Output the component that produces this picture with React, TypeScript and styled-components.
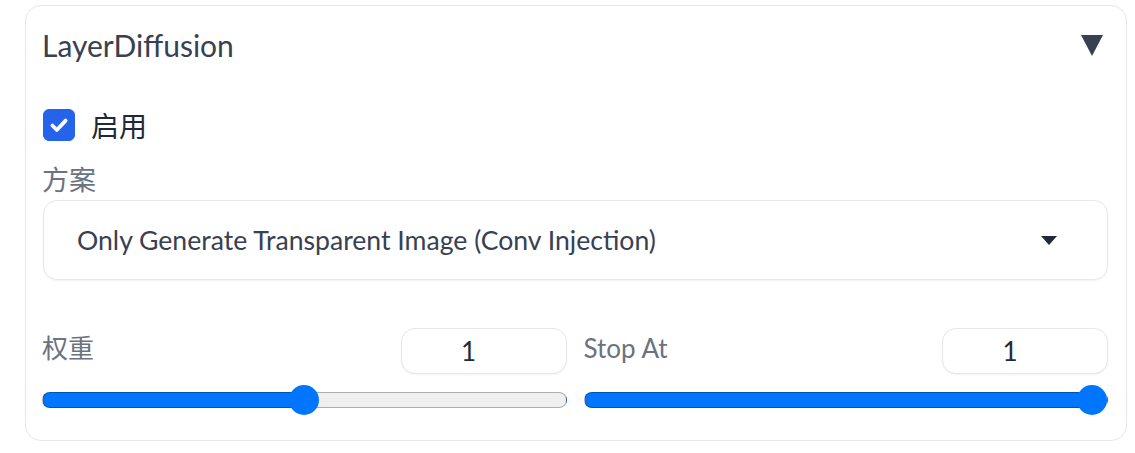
import { useState } from "react";
import styled, { createGlobalStyle } from "styled-components";

const GlobalStyle = createGlobalStyle`
  html, body {
    margin: 0;
    padding: 0;
    background: #ffffff;
  }
  body {
    font-family: Lato, "Noto Sans CJK SC", sans-serif;
  }
  * {
    box-sizing: border-box;
  }
`;

const Page = styled.div`
  padding: 5px 8px 0 25px;
`;

const Panel = styled.div`
  width: 1102px;
  border: 1px solid #e5e7eb;
  border-radius: 16px;
  padding: 19px 18px 25px 16px;
  display: flex;
  flex-direction: column;
  background: #fff;
`;

const Header = styled.div`
  display: flex;
  align-items: center;
  justify-content: space-between;
  height: 40px;
`;

const Title = styled.span`
  font-size: 30px;
  color: #374151;
`;

const Caret = styled.span`
  width: 22px;
  height: 22px;
  display: flex;
  margin-right: 5px;
`;

const CheckRow = styled.label`
  margin-top: 44px;
  display: flex;
  align-items: center;
  gap: 16px;
  height: 32px;
  cursor: pointer;
`;

const CheckBox = styled.span<{ $on: boolean }>`
  width: 32px;
  height: 32px;
  border-radius: 6px;
  background: ${(p) => (p.$on ? "#2563eb" : "#fff")};
  border: 1px solid ${(p) => (p.$on ? "#2563eb" : "#d1d5db")};
  display: flex;
  align-items: center;
  justify-content: center;
  margin-left: 1px;
`;

const CheckText = styled.span`
  font-size: 28px;
  color: #1f2937;
`;

const Label = styled.div`
  font-size: 27px;
  line-height: 32px;
  color: #6b7280;
`;

const SchemeLabel = styled(Label)`
  margin-top: 23px;
`;

const Select = styled.div`
  margin-top: 4px;
  height: 80px;
  border: 1px solid #e5e7eb;
  border-radius: 14px;
  box-shadow: 0 1px 2px rgba(0, 0, 0, 0.05);
  display: flex;
  align-items: center;
  justify-content: space-between;
  padding: 0 50px 0 33px;
  margin-left: 1px;
`;

const SelectText = styled.span`
  font-size: 26.6px;
  color: #374151;
`;

const SliderGrid = styled.div`
  margin-top: 48px;
  display: grid;
  grid-template-columns: 1fr 1fr;
  column-gap: 17px;
`;

const SliderBlock = styled.div`
  display: flex;
  flex-direction: column;
`;

const SliderHead = styled.div`
  display: flex;
  justify-content: space-between;
  align-items: flex-start;
  height: 46px;
`;

const SliderLabel = styled(Label)`
  line-height: 40px;
  font-size: 26px;
`;

const NumberBox = styled.input`
  width: 166px;
  height: 46px;
  border: 1px solid #e5e7eb;
  border-radius: 14px;
  box-shadow: 0 1px 2px rgba(0, 0, 0, 0.05);
  font-family: Lato, sans-serif;
  font-size: 26px;
  color: #1f2937;
  text-align: center;
  padding: 0 30px 0 0;
  outline: none;
  background: #fff;
`;

const Range = styled.input`
  -webkit-appearance: none;
  appearance: none;
  margin: 11px 0 0;
  width: 100%;
  height: 30px;
  background: transparent;
  outline: none;

  &::-webkit-slider-runnable-track {
    height: 16px;
    border-radius: 8px;
    border: 1px solid rgba(0, 0, 0, 0.28);
    background: var(--fill);
  }

  &::-webkit-slider-thumb {
    -webkit-appearance: none;
    appearance: none;
    width: 30px;
    height: 30px;
    border-radius: 50%;
    background: #0075ff;
    border: none;
    margin-top: -8px;
  }
`;

type SliderProps = {
  label: string;
  value: number;
  shown: number;
  onChange: (v: number) => void;
};

const Slider = ({ label, value, shown, onChange }: SliderProps) => {
  const stop = `calc(15px + ${value} * (100% - 30px))`;
  const fill = `linear-gradient(to right, #0075ff 0, #0075ff ${stop}, #efefef ${stop}, #efefef 100%)`;
  return (
    <SliderBlock>
      <SliderHead>
        <SliderLabel>{label}</SliderLabel>
        <NumberBox value={shown} readOnly />
      </SliderHead>
      <Range
        type="range"
        min={0}
        max={1}
        step={0.01}
        value={value}
        onChange={(e) => onChange(Number(e.target.value))}
        style={{ ["--fill" as string]: fill }}
      />
    </SliderBlock>
  );
};

const App = () => {
  const [enabled, setEnabled] = useState(true);
  const [weight, setWeight] = useState(0.5);
  const [stopAt, setStopAt] = useState(1);

  return (
    <Page>
      <GlobalStyle />
      <Panel>
        <Header>
          <Title>LayerDiffusion</Title>
          <Caret>
            <svg width="22" height="22" viewBox="0 0 22 22">
              <path d="M0 1 H22 L11 22 Z" fill="#374151" />
            </svg>
          </Caret>
        </Header>

        <CheckRow onClick={() => setEnabled(!enabled)}>
          <CheckBox $on={enabled}>
            {enabled && (
              <svg width="22" height="22" viewBox="0 0 20 20">
                <path
                  d="M4 10.5 L8 14.5 L16 6"
                  fill="none"
                  stroke="#fff"
                  strokeWidth="3.4"
                  strokeLinecap="round"
                  strokeLinejoin="round"
                />
              </svg>
            )}
          </CheckBox>
          <CheckText>启用</CheckText>
        </CheckRow>

        <SchemeLabel>方案</SchemeLabel>
        <Select>
          <SelectText>Only Generate Transparent Image (Conv Injection)</SelectText>
          <svg width="16" height="9" viewBox="0 0 16 9">
            <path d="M0 0 H16 L8 9 Z" fill="#1f2937" />
          </svg>
        </Select>

        <SliderGrid>
          <Slider label="权重" value={weight} shown={1} onChange={setWeight} />
          <Slider label="Stop At" value={stopAt} shown={1} onChange={setStopAt} />
        </SliderGrid>
      </Panel>
    </Page>
  );
};

export default App;
